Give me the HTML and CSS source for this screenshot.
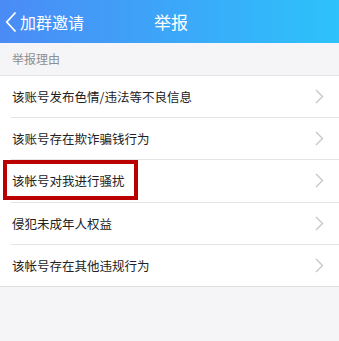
FILE: index.html
```html
<!DOCTYPE html>
<html lang="zh-CN">
<head>
    <meta charset="UTF-8">
    <meta name="viewport" content="width=device-width, initial-scale=1.0">
    <title>举报</title>
    <link rel="stylesheet" href="styles.css">
</head>
<body>
    <div class="nav-bar">
        <a class="back-link" href="#">
            <svg class="back-icon" width="12" height="22" viewBox="0 0 12 22">
                <path d="M10.5 1.5 L1.8 11 L10.5 20.5" fill="none" stroke="#fff" stroke-width="1.8"/>
            </svg>
            <span>加群邀请</span>
        </a>
        <div class="nav-title">举报</div>
    </div>

    <div class="section-title">举报理由</div>

    <ul class="reason-list">
        <li class="reason-item"><span>该账号发布色情/违法等不良信息</span><svg class="chevron" width="9" height="15" viewBox="0 0 9 15"><path d="M1 1 L7.5 7.5 L1 14" fill="none" stroke="#c7c7cc" stroke-width="1.4"/></svg></li>
        <li class="reason-item"><span>该账号存在欺诈骗钱行为</span><svg class="chevron" width="9" height="15" viewBox="0 0 9 15"><path d="M1 1 L7.5 7.5 L1 14" fill="none" stroke="#c7c7cc" stroke-width="1.4"/></svg></li>
        <li class="reason-item highlighted"><span>该帐号对我进行骚扰</span><svg class="chevron" width="9" height="15" viewBox="0 0 9 15"><path d="M1 1 L7.5 7.5 L1 14" fill="none" stroke="#c7c7cc" stroke-width="1.4"/></svg></li>
        <li class="reason-item"><span>侵犯未成年人权益</span><svg class="chevron" width="9" height="15" viewBox="0 0 9 15"><path d="M1 1 L7.5 7.5 L1 14" fill="none" stroke="#c7c7cc" stroke-width="1.4"/></svg></li>
        <li class="reason-item"><span>该帐号存在其他违规行为</span><svg class="chevron" width="9" height="15" viewBox="0 0 9 15"><path d="M1 1 L7.5 7.5 L1 14" fill="none" stroke="#c7c7cc" stroke-width="1.4"/></svg></li>
    </ul>
</body>
</html>
```

FILE: styles.css
```css
body {
    margin: 0;
    background-color: #f5f5f7;
    font-family: "Noto Sans CJK SC", "Noto Sans", sans-serif;
}

.nav-bar {
    position: relative;
    height: 43px;
    display: flex;
    align-items: center;
    justify-content: center;
    background: linear-gradient(to right, #4b8bf6, #2dc2fb);
}

.back-link {
    position: absolute;
    left: 5px;
    top: 0;
    height: 43px;
    display: flex;
    align-items: center;
    color: #fff;
    text-decoration: none;
    font-size: 16px;
}

.back-icon {
    margin-right: 3px;
    margin-top: 1px;
}

.nav-title {
    color: #fff;
    font-size: 17px;
    margin-left: 3px;
}

.section-title {
    height: 32px;
    line-height: 32px;
    padding-left: 12px;
    font-size: 12px;
    color: #8e8e93;
}

.reason-list {
    list-style: none;
    margin: 0;
    padding: 0 0 0 11px;
    background: #fff;
    border-top: 1px solid #e4e4e6;
    border-bottom: 1px solid #e0e0e2;
}

.reason-item {
    position: relative;
    height: 41.2px;
    display: flex;
    align-items: center;
    justify-content: space-between;
    padding-right: 15px;
    font-size: 12.5px;
    color: #222;
    border-bottom: 1px solid #e4e4e6;
}

.reason-item:last-child {
    border-bottom: none;
}

.reason-item span {
    padding-left: 1px;
}

/* red annotation box over the third row */
.highlighted::before {
    content: "";
    position: absolute;
    left: -8px;
    top: 0;
    width: 127px;
    height: 32px;
    border: 4px solid #b80000;
}
```
